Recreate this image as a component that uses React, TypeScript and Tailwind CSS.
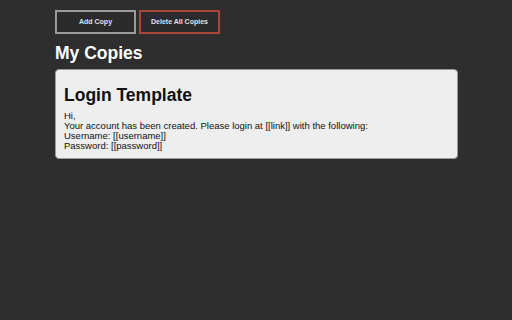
export default function App() {
  return (
    <div className="min-h-[320px] w-[512px] bg-[#2e2e2e] font-['Liberation_Sans',Arial,sans-serif]">
      <div className="px-[55px] pt-[10px]">
        <div className="flex gap-[3px]">
          <button
            type="button"
            className="h-[24px] w-[81px] border-2 border-[#9a9a9a] bg-[#2b2b2b] text-[7px] font-bold text-[#e0e0e0]"
          >
            Add Copy
          </button>
          <button
            type="button"
            className="h-[24px] w-[81px] border-2 border-[#a8483a] bg-[#2b2b2b] text-[7px] font-bold text-[#e0e0e0]"
          >
            Delete All Copies
          </button>
        </div>
        <h2 className="mt-[8px] text-[17.5px] font-bold leading-[22px] text-white">My Copies</h2>
        <div className="mt-[5px] w-[403px] rounded-[4px] border border-[#9a9a9a] bg-[#eeeeee] px-[8px] pb-[7px] pt-[13px] text-[#111]">
          <h3 className="text-[17.5px] font-bold leading-[24px]">Login Template</h3>
          <div className="mt-[4px] text-[9.5px] leading-[10px]">
            <p>Hi,</p>
            <p>Your account has been created. Please login at [[link]] with the following:</p>
            <p>Username: [[username]]</p>
            <p>Password: [[password]]</p>
          </div>
        </div>
      </div>
    </div>
  );
}
